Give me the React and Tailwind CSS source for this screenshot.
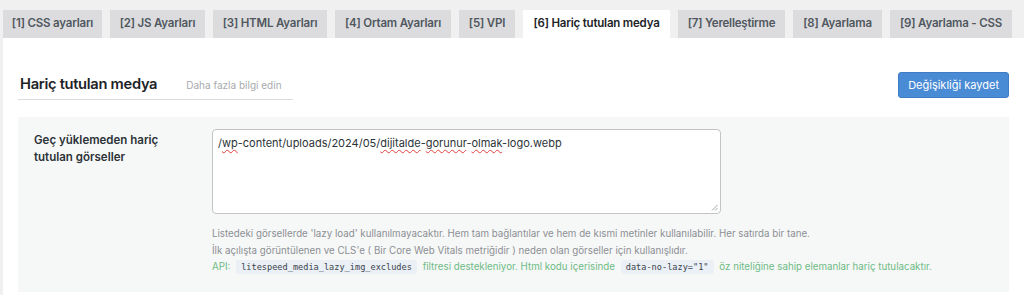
import React from 'react';

const tabs = [
    { label: '[1] CSS ayarları', w: 'w-[99px]' },
    { label: '[2] JS Ayarları', w: 'w-[95px]' },
    { label: '[3] HTML Ayarları', w: 'w-[114px]' },
    { label: '[4] Ortam Ayarları', w: 'w-[116px]' },
    { label: '[5] VPI', w: 'w-[56px]' },
    { label: '[6] Hariç tutulan medya', w: 'w-[147px]' },
    { label: '[7] Yerelleştirme', w: 'w-[107px]' },
    { label: '[8] Ayarlama', w: 'w-[89px]' },
    { label: '[9] Ayarlama - CSS', w: 'w-[122px]' },
];

const ACTIVE = 5;

const squiggle = 'underline decoration-wavy decoration-[#e04040] decoration-1 underline-offset-2';
const code = "mx-[3px] px-[5px] py-[2px] rounded-[3px] bg-[#eaf0f6] text-[#3c434a] font-['DejaVu_Sans_Mono',monospace] text-[8.6px]";

const App = () => {
    return (
        <div className="h-[295px] overflow-hidden bg-[#f0f0f1] pl-[3px] pt-[10px] font-['Inter',sans-serif] text-[#2c3338]">
            {/* tabs */}
            <div className="flex gap-[8px]">
                {tabs.map((t, i) => (
                    <div
                        key={t.label}
                        className={`${t.w} shrink-0 h-[28px] flex items-center justify-center whitespace-nowrap text-[11.5px] font-semibold tracking-[-0.2px] ${
                            i === ACTIVE ? 'bg-white text-[#1d2327]' : 'bg-[#dcdcde] text-[#50575e]'
                        }`}
                    >
                        {t.label}
                    </div>
                ))}
            </div>

            {/* content */}
            <div className="bg-white pl-[15px] pr-[15px] pt-[34px] pb-[10px]">
                <div className="flex items-start justify-between">
                    <div className="flex items-baseline w-[275px] border-b border-[#dcdcde] pb-[4px] pl-[2px] mt-[1px] whitespace-nowrap">
                        <h2 className="text-[14.7px] font-semibold text-[#1d2327] tracking-[-0.3px]">Hariç tutulan medya</h2>
                        <span className="ml-[29px] text-[10px] text-[#a7aaad]">Daha fazla bilgi edin</span>
                    </div>
                    <button className="h-[26px] px-[9px] rounded-[3px] bg-[#4a8bd5] text-white text-[11px] border border-[#3f7cc4] whitespace-nowrap">
                        Değişikliği kaydet
                    </button>
                </div>

                <div className="mt-[17px] bg-[#f6f7f7] flex pt-[12px] pb-[16px]">
                    <div className="w-[194px] shrink-0 pl-[16px] pt-[3px] pr-[30px] text-[11.5px] font-semibold leading-[17px] text-[#2c3338]">
                        Geç yüklemeden hariç tutulan görseller
                    </div>
                    <div>
                        <div className="w-[509px] h-[85px] rounded-[4px] border border-[#c3c4c7] bg-white px-[5px] pt-[5px] text-[11px] text-[#2c3338] relative">
                            /<span className={squiggle}>wp</span>-content/uploads/2024/05/<span className={squiggle}>dijitalde</span>-<span className={squiggle}>gorunur</span>-<span className={squiggle}>olmak</span>-logo.webp
                            <svg className="absolute right-[2px] bottom-[2px]" width="7" height="7" viewBox="0 0 7 7">
                                <path d="M6.5 1 L1 6.5 M6.5 4 L4 6.5" stroke="#8c8f94" strokeWidth="0.8" />
                            </svg>
                        </div>
                        <div className="mt-[12px] text-[9.75px] leading-[16.5px] text-[#8c8f94] whitespace-nowrap">
                            <p>Listedeki görsellerde 'lazy load' kullanılmayacaktır. Hem tam bağlantılar ve hem de kısmi metinler kullanılabilir. Her satırda bir tane.</p>
                            <p>İlk açılışta görüntülenen ve CLS'e ( Bir Core Web Vitals metriğidir ) neden olan görseller için kullanışlıdır.</p>
                            <p className="text-[#6dbb85]">
                                API:{' '}
                                <code className={code}>litespeed_media_lazy_img_excludes</code>{' '}
                                filtresi destekleniyor. Html kodu içerisinde{' '}
                                <code className={code}>data-no-lazy="1"</code>{' '}
                                öz niteliğine sahip elemanlar hariç tutulacaktır.
                            </p>
                        </div>
                    </div>
                </div>
            </div>
        </div>
    );
};

export default App;
